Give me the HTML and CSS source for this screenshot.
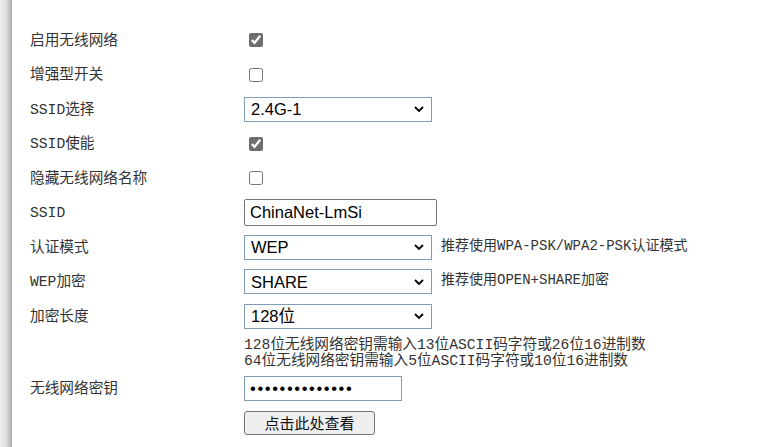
FILE: index.html
```html
<!DOCTYPE html>
<html lang="zh-CN">
<head>
    <meta charset="UTF-8">
    <title>无线网络设置</title>
    <link rel="stylesheet" href="styles.css">
</head>
<body>

<div class="page">
    <div class="side"></div>

    <form class="form">
        <div class="row">
            <span class="label">启用无线网络</span>
            <input type="checkbox" class="check" checked>
        </div>
        <div class="row">
            <span class="label">增强型开关</span>
            <input type="checkbox" class="check">
        </div>
        <div class="row">
            <span class="label">SSID选择</span>
            <select class="select">
                <option>2.4G-1</option>
            </select>
        </div>
        <div class="row">
            <span class="label">SSID使能</span>
            <input type="checkbox" class="check" checked>
        </div>
        <div class="row">
            <span class="label">隐藏无线网络名称</span>
            <input type="checkbox" class="check">
        </div>
        <div class="row">
            <span class="label">SSID</span>
            <input type="text" class="text" value="ChinaNet-LmSi">
        </div>
        <div class="row">
            <span class="label">认证模式</span>
            <select class="select">
                <option>WEP</option>
            </select>
            <span class="tip">推荐使用WPA-PSK/WPA2-PSK认证模式</span>
        </div>
        <div class="row">
            <span class="label">WEP加密</span>
            <select class="select">
                <option>SHARE</option>
            </select>
            <span class="tip">推荐使用OPEN+SHARE加密</span>
        </div>
        <div class="row">
            <span class="label">加密长度</span>
            <select class="select">
                <option>128位</option>
            </select>
        </div>
        <div class="note-row">
            <span class="label"></span>
            <div class="note">
                128位无线网络密钥需输入13位ASCII码字符或26位16进制数<br>
                64位无线网络密钥需输入5位ASCII码字符或10位16进制数
            </div>
        </div>
        <div class="row pwd-row">
            <span class="label">无线网络密钥</span>
            <input type="password" class="pwd" value="12345678901234">
        </div>
        <div class="row btn-row">
            <span class="label"></span>
            <button type="button" class="btn">点击此处查看</button>
        </div>
    </form>
</div>

</body>
</html>
```

FILE: styles.css
```css
body {
    margin: 0;
    padding: 0;
    background-color: #fff;
    color: #333;
    font-family: "Liberation Mono", "Noto Sans CJK SC", monospace;
    font-size: 14.67px;
    line-height: 16px;
}
.page {
    display: flex;
    min-height: 100vh;
}
.side {
    width: 12px;
    flex: none;
    background: linear-gradient(to right, #efefef, #dcdcdc 55%, #a9a9a9);
}
.form {
    margin: 0;
    padding: 23px 0 0 18px;
}
.row {
    display: flex;
    align-items: center;
    height: 34.5px;
}
.label {
    width: 214px;
    flex: none;
    padding-top: 1px;
}
.check {
    width: 14px;
    height: 14px;
    margin: 0 0 0 5px;
    accent-color: #6e6e6e;
}
.select {
    appearance: none;
    -webkit-appearance: none;
    box-sizing: border-box;
    width: 188px;
    height: 25px;
    margin: 0;
    padding: 0 22px 0 6px;
    border: 1px solid #7f9db9;
    border-radius: 0;
    background: #fff url("data:image/svg+xml,%3Csvg xmlns='http://www.w3.org/2000/svg' width='10' height='6' viewBox='0 0 10 6'%3E%3Cpath d='M1 1l4 4 4-4' fill='none' stroke='%23000' stroke-width='1.8'/%3E%3C/svg%3E") no-repeat right 7px center;
    color: #000;
    font-family: "Liberation Sans", "Noto Sans CJK SC", sans-serif;
    font-size: 16.5px;
}
.text {
    box-sizing: border-box;
    width: 193px;
    height: 27px;
    margin: 0;
    padding: 0 5px;
    border: 1px solid #767676;
    border-radius: 2px;
    color: #000;
    font-family: "Liberation Sans", sans-serif;
    font-size: 16.5px;
}
.tip {
    margin-left: 9px;
    margin-top: -3px;
    font-size: 14px;
}
.note-row {
    display: flex;
    padding-top: 3.5px;
}
.pwd-row {
    height: 25px;
    margin-top: 7px;
}
.pwd {
    box-sizing: border-box;
    width: 158px;
    height: 25px;
    margin: 0;
    padding: 0 5px;
    border: 1px solid #7f9db9;
    color: #000;
    font-family: "Liberation Sans", sans-serif;
    font-size: 16.5px;
    letter-spacing: 1.6px;
}
.btn-row {
    height: 24px;
    margin-top: 10px;
}
.btn {
    box-sizing: border-box;
    width: 131px;
    height: 24px;
    margin: 0;
    padding: 0;
    border: 1px solid #767676;
    border-radius: 3px;
    background-color: #efefef;
    color: #111;
    font-family: "Noto Sans CJK SC", sans-serif;
    font-size: 15px;
    line-height: 20px;
}
```
